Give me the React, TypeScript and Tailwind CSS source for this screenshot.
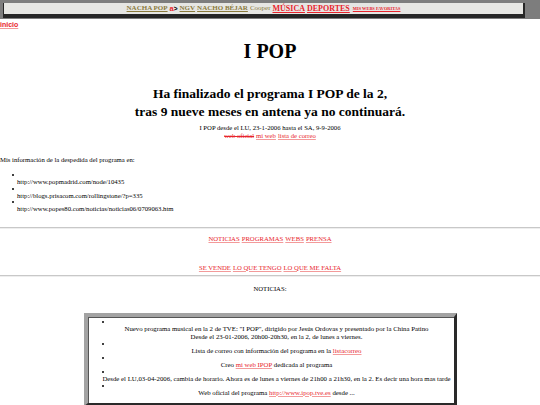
import React from 'react';

const red = 'text-[#e8242c] underline decoration-[#f39a9a]';

const Dot = () => <div className="h-[2px] w-[2px] rounded-full bg-black" />;

const linksLeft = [
  'http://www.popmadrid.com/node/10435',
  'http://blogs.prisacom.com/rollingstone/?p=335',
  'http://www.popes80.com/noticias/noticias06/0709063.htm',
];

const App: React.FC = () => {
  return (
    <div className="min-h-[405px] bg-white text-black font-['Liberation_Serif',serif] text-[6.7px] leading-[7px]">
      {/* Banner */}
      <div className="h-[19px] bg-[#7d7d7d] pt-[3px] pl-[3px] pr-[15px]">
        <div className="h-[15px] bg-[#e6e6e3] border-l border-r-[2px] border-b-[4px] border-[#262626] flex items-center justify-center gap-[2px] font-bold">
          <span className="text-[7px] text-[#8a7a3c] underline">NACHA POP</span>
          <span className="font-['Liberation_Sans',sans-serif] text-[7.5px] text-[#e8242c]">a</span>
          <span className="font-['Liberation_Sans',sans-serif] text-[6.5px] -ml-[2px]">&gt;</span>
          <span className="text-[7px] text-[#8a7a3c] underline">NGV</span>
          <span className="text-[7px] text-[#8a7a3c] underline">NACHO BÉJAR</span>
          <span className="text-[7px] text-[#8a7a3c] font-normal">Cooper</span>
          <span className="text-[8px] text-[#e8242c] underline">MÚSICA</span>
          <span className="text-[8px] text-[#e8242c] underline">DEPORTES</span>
          <span className="text-[4.4px] text-[#e8242c] underline ml-[1px]">MIS WEBS FAVORITAS</span>
        </div>
      </div>

      {/* inicio */}
      <div className="pt-[2px] font-['Liberation_Sans',sans-serif] font-bold text-[7px] leading-[8px]">
        <span className={red}>inicio</span>
      </div>

      <h1 className="mt-[10px] text-center font-bold text-[20px] leading-[24px]">I POP</h1>

      <h2 className="mt-[22px] text-center font-bold text-[13.5px] leading-[18px]">
        Ha finalizado el programa I POP de la 2,
        <br />
        tras 9 nueve meses en antena ya no continuará.
      </h2>

      <div className="mt-[3px] text-center leading-[7.5px]">
        <div>I POP desde el LU, 23-1-2006 hasta el SA, 9-9-2006</div>
        <div className="flex justify-center gap-[2px]">
          <span className="text-[#e8242c] line-through">web oficial</span>
          <span className={red}>mi web</span>
          <span className={red}>lista de correo</span>
        </div>
      </div>

      <p className="mt-[17px]">Mis información de la despedida del programa en:</p>

      <div className="mt-[9px] flex flex-col">
        {linksLeft.map((l) => (
          <div key={l}>
            <div className="h-[6px] pl-[12px] flex items-center">
              <Dot />
            </div>
            <div className="pl-[17px] leading-[7.5px]">{l}</div>
          </div>
        ))}
      </div>

      <div className="mt-[14px] h-[2px] border-t border-[#c8c8c8] border-b-[#eeeeee] border-b" />

      <div className="mt-[6px] flex justify-center gap-[2px]">
        <span className={red}>NOTICIAS</span>
        <span className={red}>PROGRAMAS</span>
        <span className={red}>WEBS</span>
        <span className={red}>PRENSA</span>
      </div>

      <div className="mt-[22px] flex justify-center gap-[2px]">
        <span className={red}>SE VENDE</span>
        <span className={red}>LO QUE TENGO</span>
        <span className={red}>LO QUE ME FALTA</span>
      </div>

      <div className="mt-[4px] h-[2px] border-t border-[#c8c8c8] border-b-[#eeeeee] border-b" />

      <p className="mt-[8px] text-center">NOTICIAS:</p>

      {/* News box */}
      <div className="mx-auto mt-[21px] w-[373px] border-t-[4px] border-l-[4px] border-r-[3px] border-b-[3px] border-t-[#a3a3a3] border-l-[#a3a3a3] border-r-[#2a2a2a] border-b-[#2a2a2a] bg-white">
        <div className="border-l border-t border-[#555] pt-[1px] pb-[6px] pl-[13px] pr-[2px] text-[6.8px] leading-[8px]">
          <div className="h-[6px] flex items-center"><Dot /></div>
          <div className="text-center">
            Nuevo programa musical en la 2 de TVE: "I POP", dirigido por Jesús Ordovas y presentado por la China Patino
            <br />
            Desde el 23-01-2006, 20h00-20h30, en la 2, de lunes a viernes.
          </div>
          <div className="h-[6px] flex items-center"><Dot /></div>
          <div className="text-center">
            Lista de correo con información del programa en la <span className={red}>listacorreo</span>
          </div>
          <div className="h-[6px] flex items-center"><Dot /></div>
          <div className="text-center">
            Creo <span className={red}>mi web IPOP</span> dedicada al programa
          </div>
          <div className="h-[6px] flex items-center"><Dot /></div>
          <div className="text-center whitespace-nowrap">
            Desde el LU,03-04-2006, cambia de horario. Ahora es de lunes a viernes de 21h00 a 21h30, en la 2. Es decir una hora mas tarde
          </div>
          <div className="h-[6px] flex items-center"><Dot /></div>
          <div className="text-center">
            Web oficial del programa <span className={red}>http://www.ipop.tve.es</span> desde ...
          </div>
        </div>
      </div>
    </div>
  );
};

export default App;
